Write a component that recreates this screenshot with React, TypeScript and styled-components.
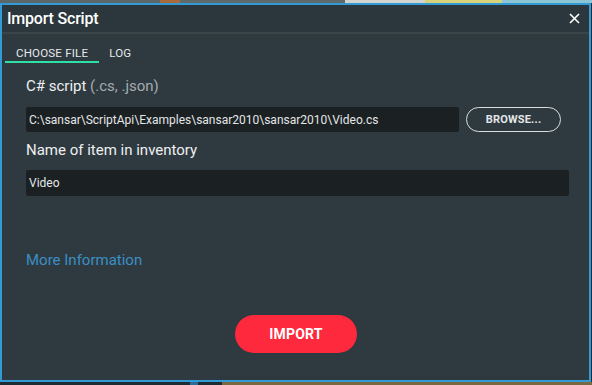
import styled, {createGlobalStyle} from 'styled-components'

const GlobalStyle = createGlobalStyle`
  html, body {
    margin: 0;
    padding: 0;
    background: #1f2b31;
    font-family: Roboto, "Noto Sans", sans-serif;
  }
`

const sceneTop = [
  {w: 160, c: '#5d6668'},
  {w: 20, c: '#a86a3a'},
  {w: 165, c: '#5f6a6d'},
  {w: 80, c: '#d3d4d0'},
  {w: 77, c: '#d8d27a'},
  {w: 90, c: '#8cc6d6'},
]

const sceneBottom = [
  {w: 190, c: '#1e2b31'},
  {w: 8, c: '#2d6e96'},
  {w: 24, c: '#1e2b31'},
  {w: 370, c: '#7a6840'},
]

export const App = () => {
  return (
    <Page>
      <GlobalStyle />
      <SceneStrip>
        {sceneTop.map((s, i) => <SceneBit key={i} style={{width: s.w, background: s.c}} />)}
      </SceneStrip>
      <Dialog>
        <Header>
          <Title>Import Script</Title>
          <Close aria-label='close'>
            <svg width='11' height='11' viewBox='0 0 11 11'>
              <path d='M1 1 L10 10 M10 1 L1 10' stroke='#ffffff' strokeWidth='1.6' />
            </svg>
          </Close>
        </Header>
        <Divider />
        <Tabs>
          <Tab active>CHOOSE FILE</Tab>
          <Tab>LOG</Tab>
        </Tabs>
        <Content>
          <Label>C# script <Muted>(.cs, .json)</Muted></Label>
          <FileRow>
            <Field>C:\sansar\ScriptApi\Examples\sansar2010\sansar2010\Video.cs</Field>
            <Browse>BROWSE...</Browse>
          </FileRow>
          <Label second>Name of item in inventory</Label>
          <Field wide>Video</Field>
          <Link>More Information</Link>
          <Actions>
            <ImportButton>IMPORT</ImportButton>
          </Actions>
        </Content>
      </Dialog>
      <SceneStrip>
        {sceneBottom.map((s, i) => <SceneBit key={i} style={{width: s.w, background: s.c}} />)}
      </SceneStrip>
    </Page>
  )
}

export default App

const Page = styled.div`
  width: 592px;
  height: 385px;
  display: flex;
  flex-direction: column;
  overflow: hidden;
`

const SceneStrip = styled.div`
  display: flex;
  height: 3px;
  flex: none;
`

const SceneBit = styled.div`
  height: 100%;
`

const Dialog = styled.div`
  box-sizing: border-box;
  width: 591px;
  height: 379px;
  flex: none;
  border: 2px solid #329bd6;
  background: #2f3a40;
  display: flex;
  flex-direction: column;
`

const Header = styled.div`
  height: 27px;
  flex: none;
  display: flex;
  align-items: center;
  justify-content: space-between;
  padding: 0 9px 0 5px;
  background: #2c373d;
`

const Title = styled.div`
  color: #ffffff;
  font-size: 16px;
  font-weight: 500;
  letter-spacing: -0.2px;
`

const Close = styled.div`
  display: flex;
  width: 11px;
  height: 11px;
`

const Divider = styled.div`
  height: 2px;
  flex: none;
  background: #3a4549;
`

const Tabs = styled.div`
  display: flex;
  padding-left: 3px;
`

const Tab = styled.div<{active?: boolean}>`
  padding: 12px ${p => p.active ? '11px' : '10px'} 1px;
  font-size: 11.5px;
  line-height: 14px;
  color: #e6e9ea;
  letter-spacing: 0.2px;
  border-bottom: 2px solid ${p => p.active ? '#2fe0a6' : 'transparent'};
`

const Content = styled.div`
  display: flex;
  flex-direction: column;
  padding: 13px 20px 0 24px;
`

const Label = styled.div<{second?: boolean}>`
  font-size: 15px;
  line-height: 20px;
  color: #eef0f1;
  margin-top: ${p => p.second ? '8px' : '0'};
`

const Muted = styled.span`
  color: #a3abb0;
`

const FileRow = styled.div`
  display: flex;
  align-items: center;
  gap: 7px;
  margin-top: 11px;
  padding-right: 8px;
`

const Field = styled.div<{wide?: boolean}>`
  flex: ${p => p.wide ? 'none' : '1'};
  box-sizing: border-box;
  height: ${p => p.wide ? '26px' : '25px'};
  margin-top: ${p => p.wide ? '10px' : '0'};
  background: #1b2023;
  border-radius: 2px;
  padding-left: 3px;
  display: flex;
  align-items: center;
  color: #e4e6e7;
  font-size: 12px;
  white-space: nowrap;
  overflow: hidden;
`

const Browse = styled.button`
  width: 95px;
  height: 25px;
  box-sizing: border-box;
  border: 1.5px solid #d9dcdd;
  border-radius: 13px;
  background: transparent;
  color: #e4e6e7;
  font-family: Roboto, "Noto Sans", sans-serif;
  font-size: 11px;
  font-weight: 700;
  letter-spacing: 0.2px;
  padding: 0;
`

const Link = styled.div`
  margin-top: 54px;
  font-size: 15px;
  line-height: 20px;
  color: #3a8fc4;
`

const Actions = styled.div`
  display: flex;
  justify-content: center;
  margin-top: 45px;
  margin-left: -24px;
  margin-right: -20px;
`

const ImportButton = styled.button`
  width: 122px;
  height: 38px;
  border: none;
  border-radius: 19px;
  background: #fe293c;
  color: #ffffff;
  font-family: Roboto, "Noto Sans", sans-serif;
  font-size: 14px;
  font-weight: 700;
  letter-spacing: 0.2px;
  margin-left: 1px;
`
